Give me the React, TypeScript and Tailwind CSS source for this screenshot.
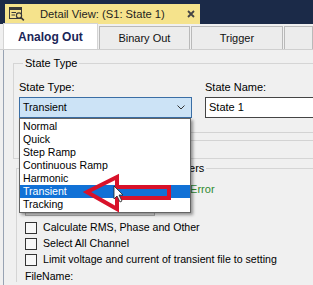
const stateTypes = ['Normal', 'Quick', 'Step Ramp', 'Continuous Ramp', 'Harmonic', 'Transient', 'Tracking'];

const options = [
  'Calculate RMS, Phase and Other',
  'Select All Channel',
  'Limit voltage and current of transient file to setting',
];

function DocIcon() {
  return (
    <svg width="16" height="14" viewBox="0 0 16 14" className="shrink-0">
      <rect x="0.5" y="0.5" width="12" height="11" fill="#f5e38c" stroke="#3a3a3a" />
      <rect x="0.5" y="0.5" width="12" height="2.5" fill="#3a3a3a" />
      <line x1="2.5" y1="5.5" x2="7" y2="5.5" stroke="#3a3a3a" />
      <line x1="2.5" y1="8" x2="6" y2="8" stroke="#3a3a3a" />
      <circle cx="10" cy="8.5" r="2.6" fill="#f5e38c" stroke="#3a3a3a" strokeWidth="1.2" />
      <line x1="11.8" y1="10.4" x2="14.8" y2="13.4" stroke="#3a3a3a" strokeWidth="1.6" />
    </svg>
  );
}

function Tab({ label, active, width }: { label: string; active?: boolean; width: string }) {
  return active ? (
    <div
      className={`${width} flex h-[26px] items-center justify-center border-x border-t border-[#d4d4d4] bg-white text-[12px] font-bold text-[#1b2557]`}
    >
      {label}
    </div>
  ) : (
    <div
      className={`${width} flex h-[23px] items-center justify-center border-x border-t border-[#b9b9b9] bg-[#ececec] text-[11px] text-[#111]`}
    >
      {label}
    </div>
  );
}

export default function App() {
  return (
    <div className="relative h-[285px] w-[313px] overflow-hidden bg-[#f0f0f0] font-['Liberation_Sans',Arial,sans-serif] text-black">
      {/* document tab */}
      <div className="h-[24px] bg-[#1b2a48] pl-[5px] pt-[4px]">
        <div className="flex h-[20px] w-[195px] items-center bg-[#f5e38c] pl-[4px] pr-[5px]">
          <DocIcon />
          <span className="ml-[15px] text-[11.2px] text-[#1e1e1e]">Detail View: (S1: State 1)</span>
          <svg width="8" height="8" viewBox="0 0 8 8" className="ml-auto">
            <path d="M1 1 L7 7 M7 1 L1 7" stroke="#444" strokeWidth="1.8" />
          </svg>
        </div>
      </div>

      {/* page tabs */}
      <div className="flex h-[26px] items-end gap-px border-b border-[#cfcfcf] pl-[3px]">
        <Tab label="Analog Out" active width="w-[98px]" />
        <Tab label="Binary Out" width="w-[94px]" />
        <Tab label="Trigger" width="w-[95px]" />
        <Tab label="" width="w-[30px]" />
      </div>

      {/* body */}
      <div className="ml-[3px] h-[235px] border-l border-[#98a3b3] pt-[7px]">
        <fieldset className="ml-[9px] w-[320px] border-y border-l border-[#d5d5d5] pb-[17px] pl-[5px]">
          <legend className="ml-[4px] px-[2px] text-[11px] leading-[13px]">State Type</legend>
          <div className="mt-[10px] flex">
            <div className="w-[173px]">
              <div className="h-[14px] text-[11px] leading-[14px]">State Type:</div>
              <div className="mt-[3px] flex h-[21px] items-center border border-[#3a6ea5] bg-[#cce3f6] pl-[3px] pr-[6px] text-[10.6px]">
                Transient
                <svg width="8" height="5" viewBox="0 0 8 5" className="ml-auto">
                  <path d="M0.5 0.5 L4 4 L7.5 0.5" fill="none" stroke="#333" />
                </svg>
              </div>
            </div>
            <div className="ml-[13px]">
              <div className="h-[14px] text-[11px] leading-[14px]">State Name:</div>
              <div className="mt-[3px] flex h-[21px] w-[120px] items-center border border-[#444] bg-white pl-[3px] text-[11px]">
                State 1
              </div>
            </div>
          </div>
          <div className="mt-[14px] h-[9px] border-y border-[#d3d3d3]" />
        </fieldset>

        <fieldset className="ml-[12px] mt-[3px] w-[320px] border-l border-t border-[#d5d5d5] pl-[8px]">
          <legend className="ml-[72px] px-[2px] text-[11px] leading-[13px]">Transient Parameters</legend>
          <div className="mt-[8px] h-[13px] pl-[148px] text-[11px] leading-[13px] text-[#2f8a2f]">No Error</div>
          <div className="mt-[3px] h-[17px] w-[130px] border border-[#adadad] bg-[#e1e1e1]" />
          <div className="mt-[6px] flex flex-col gap-[4px]">
            {options.map((o) => (
              <div key={o} className="flex h-[12px] items-center gap-[6px] text-[10.6px]">
                <div className="h-[12px] w-[12px] shrink-0 border border-[#333] bg-[#f7f7f7]" />
                {o}
              </div>
            ))}
          </div>
          <div className="mt-[4px] text-[10.6px] leading-[12px]">FileName:</div>
        </fieldset>
      </div>

      {/* open dropdown list */}
      <div className="absolute left-[19px] top-[118px] w-[172px] border border-[#646464] bg-white py-px shadow-[2px_2px_3px_rgba(0,0,0,0.4)]">
        {stateTypes.map((t) => (
          <div
            key={t}
            className={`h-[13px] pl-[3px] text-[10.6px] leading-[13px] ${t === 'Transient' ? 'bg-[#1171d6] text-white' : ''}`}
          >
            {t}
          </div>
        ))}
      </div>

      {/* red annotation arrow and cursor */}
      <svg className="pointer-events-none absolute left-0 top-0" width="313" height="285">
        <path
          d="M87 192 L117 177 L117 187 L169 187 L169 198 L117 198 L117 209 Z"
          fill="none"
          stroke="#d8122a"
          strokeWidth="4"
          strokeLinejoin="miter"
        />
        <path d="M114 186 L114 199 L117 196 L120 202 L122 201 L119 195 L123 195 Z" fill="#fff" stroke="#222" strokeWidth="0.8" />
      </svg>
    </div>
  );
}
